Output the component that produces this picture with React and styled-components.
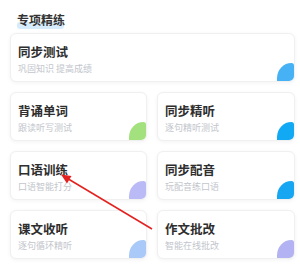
import styled, { createGlobalStyle } from "styled-components";

const GlobalStyle = createGlobalStyle`
  html, body {
    margin: 0;
    padding: 0;
    background: #fff;
  }
  body {
    font-family: "Noto Sans CJK SC", "Noto Sans", sans-serif;
  }
`;

const items = [
  { title: "同步测试", sub: "巩固知识 提高成绩", color: "#46b1f5", wide: true },
  { title: "背诵单词", sub: "跟读听写测试", color: "#a3e07e" },
  { title: "同步精听", sub: "逐句精听测试", color: "#12a9f4" },
  { title: "口语训练", sub: "口语智能打分", color: "#babaf7" },
  { title: "同步配音", sub: "玩配音练口语", color: "#17a7f2" },
  { title: "课文收听", sub: "逐句循环精听", color: "#a9c9f8" },
  { title: "作文批改", sub: "智能在线批改", color: "#b3b3f3" },
];

const App = () => {
  return (
    <Page>
      <GlobalStyle />
      <Heading>
        <HeadingText>专项精练</HeadingText>
      </Heading>
      <Grid>
        {items.map((v) => (
          <Card key={v.title} $wide={v.wide}>
            <CardTitle>{v.title}</CardTitle>
            <CardSub>{v.sub}</CardSub>
            <Leaf $color={v.color} />
          </Card>
        ))}
      </Grid>
      <Arrow width="300" height="266" viewBox="0 0 300 266">
        <line x1="152" y1="229" x2="65" y2="177" stroke="#e3211f" strokeWidth="1.5" />
        <polygon points="61,174.5 71.5,176 67,183.5" fill="#e3211f" />
      </Arrow>
    </Page>
  );
};

const Page = styled.div`
  position: relative;
  width: 300px;
  height: 266px;
  padding: 6px 5px 0 10px;
  box-sizing: border-box;
  overflow: hidden;
`;

const Heading = styled.div`
  height: 27px;
  padding-left: 7px;
`;

const HeadingText = styled.span`
  position: relative;
  z-index: 0;
  display: inline-block;
  font-size: 12px;
  font-weight: 700;
  line-height: 17px;
  color: #333;

  &::after {
    content: "";
    position: absolute;
    z-index: -1;
    left: 0;
    right: 1px;
    bottom: -1px;
    height: 7px;
    border-radius: 3px;
    background: #d6ecfc;
  }
`;

const Grid = styled.div`
  display: grid;
  grid-template-columns: 137px 138px;
  grid-auto-rows: 49px;
  column-gap: 10px;
  row-gap: 10px;
`;

const Card = styled.div`
  position: relative;
  grid-column: ${(p) => (p.$wide ? "1 / span 2" : "auto")};
  display: flex;
  flex-direction: column;
  padding: 10px 7px 0;
  box-sizing: border-box;
  background: #fff;
  border: 1px solid #f0f0f0;
  border-radius: 6px;
  box-shadow: 0 1px 4px rgba(0, 0, 0, 0.05);
  overflow: hidden;
`;

const CardTitle = styled.div`
  font-size: 12.5px;
  font-weight: 700;
  line-height: 16px;
  color: #2e2e2e;
`;

const CardSub = styled.div`
  margin-top: 3px;
  font-size: 9px;
  line-height: 12px;
  color: #c2c5cc;
`;

const Leaf = styled.div`
  position: absolute;
  right: 0;
  bottom: 0;
  width: 17px;
  height: 18px;
  background: ${(p) => p.$color};
  border-top-left-radius: 100%;
  border-top-right-radius: 3px;
`;

const Arrow = styled.svg`
  position: absolute;
  left: 0;
  top: 0;
  pointer-events: none;
`;

export default App;
